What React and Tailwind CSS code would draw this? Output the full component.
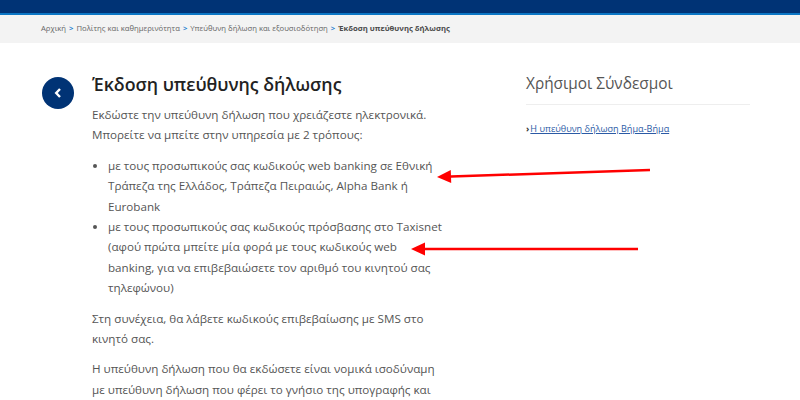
import React from "react";

function Crumb({ children }) {
  return (
    <>
      <span>{children}</span>
      <span className="text-[#1f7fd0] mx-[3px] font-bold">&gt;</span>
    </>
  );
}

function Arrow({ x1, y1, x2, y2 }) {
  const size = 14;
  const angle = Math.atan2(y1 - y2, x1 - x2);
  const bx = x2 + Math.cos(angle) * size;
  const by = y2 + Math.sin(angle) * size;
  const nx = -Math.sin(angle) * 6.5;
  const ny = Math.cos(angle) * 6.5;
  return (
    <>
      <line x1={x1} y1={y1} x2={bx} y2={by} stroke="#ff0000" strokeWidth="2.5" />
      <polygon points={`${x2},${y2} ${bx + nx},${by + ny} ${bx - nx},${by - ny}`} fill="#ff0000" />
    </>
  );
}

export default function App() {
  return (
    <div className="relative w-[800px] h-[400px] overflow-hidden bg-white font-['Open_Sans',sans-serif] text-[#555]">
      <div className="h-[13px] bg-[#003375]" />
      <div className="h-[2px] bg-[#0b76c4]" />
      <div className="h-[28px] bg-[#f3f3f3] pl-[41px] flex items-center text-[7.7px] text-[#666] whitespace-nowrap">
        <Crumb>Αρχική</Crumb>
        <Crumb>Πολίτης και καθημερινότητα</Crumb>
        <Crumb>Υπεύθυνη δήλωση και εξουσιοδότηση</Crumb>
        <span className="font-bold text-[#4b4b4b]">Έκδοση υπεύθυνης δήλωσης</span>
      </div>

      <div className="flex pl-[42px] pt-[29px]">
        <div className="w-[32px] h-[32px] mt-[5px] rounded-full bg-[#003375] flex items-center justify-center shrink-0">
          <svg width="10" height="12" viewBox="0 0 10 12" fill="none">
            <path d="M7 2 L3.2 6 L7 10" stroke="white" strokeWidth="2.4" />
          </svg>
        </div>

        <div className="w-[352px] ml-[18px] text-[11.65px] leading-[20.4px]">
          <h1 className="text-[17.8px] leading-[24px] font-semibold text-[#222] mb-[9px]">Έκδοση υπεύθυνης δήλωσης</h1>
          <p className="mb-[10px]">
            Εκδώστε την υπεύθυνη δήλωση που χρειάζεστε ηλεκτρονικά.
            <br />
            Μπορείτε να μπείτε στην υπηρεσία με 2 τρόπους:
          </p>
          <ul className="list-disc pl-[16px] mb-[10px]">
            <li>
              με τους προσωπικούς σας κωδικούς web banking σε Εθνική
              <br />
              Τράπεζα της Ελλάδος, Τράπεζα Πειραιώς, Alpha Bank ή
              <br />
              Eurobank
            </li>
            <li>
              με τους προσωπικούς σας κωδικούς πρόσβασης στο Taxisnet
              <br />
              (αφού πρώτα μπείτε μία φορά με τους κωδικούς web
              <br />
              banking, για να επιβεβαιώσετε τον αριθμό του κινητού σας
              <br />
              τηλεφώνου)
            </li>
          </ul>
          <p className="mb-[10px]">
            Στη συνέχεια, θα λάβετε κωδικούς επιβεβαίωσης με SMS στο
            <br />
            κινητό σας.
          </p>
          <p>
            Η υπεύθυνη δήλωση που θα εκδώσετε είναι νομικά ισοδύναμη
            <br />
            με υπεύθυνη δήλωση που φέρει το γνήσιο της υπογραφής και
          </p>
        </div>

        <div className="w-[224px] ml-[82px]">
          <h2 className="text-[15.4px] leading-[24px] text-[#555] pb-[8px] border-b border-[#eeeeee]">Χρήσιμοι Σύνδεσμοι</h2>
          <div className="mt-[16px] text-[9.1px] leading-[16px] flex items-center">
            <span className="text-[#333] font-bold mr-[1px]">›</span>
            <a href="#" className="underline text-[#2b5aa5]">Η υπεύθυνη δήλωση Βήμα-Βήμα</a>
          </div>
        </div>
      </div>

      <svg className="absolute left-0 top-0" width="800" height="400">
        <Arrow x1={650} y1={170} x2={437} y2={177} />
        <Arrow x1={638} y1={249} x2={411} y2={249} />
      </svg>
    </div>
  );
}
